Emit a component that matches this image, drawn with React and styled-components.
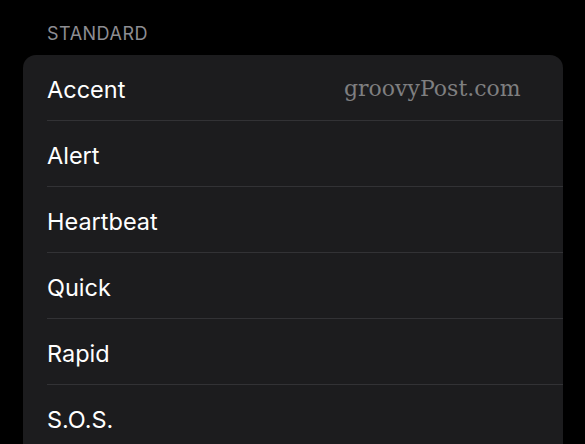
import React from "react";
import styled, { createGlobalStyle } from "styled-components";

const Global = createGlobalStyle`
  html, body { margin: 0; padding: 0; background: #000; }
  body { font-family: Inter, "Noto Sans", sans-serif; overflow: hidden; }
`;

const Page = styled.div`
  width: 585px;
  height: 444px;
  background: #000;
  padding: 23px 22px 0 23px;
  box-sizing: border-box;
  overflow: hidden;
  position: relative;
`;

const SectionHeader = styled.div`
  color: #8d8d92;
  font-size: 18px;
  letter-spacing: 0.5px;
  line-height: 22px;
  padding-left: 24px;
  margin-bottom: 10px;
`;

const Card = styled.div`
  background: #1c1c1e;
  border-radius: 13px 13px 0 0;
  height: 400px;
  padding-left: 24px;
  position: relative;
`;

const Row = styled.div`
  height: 62px;
  padding-top: 3px;
  display: flex;
  align-items: center;
  color: #fff;
  font-size: 23.5px;
  border-top: ${(p) => (p.$first ? "none" : "1px solid #323235")};
`;

const Watermark = styled.div`
  position: absolute;
  top: 21px;
  left: 321px;
  font-family: "DejaVu Serif", "Liberation Serif", serif;
  font-size: 22px;
  color: #7f7f80;
`;

const items = ["Accent", "Alert", "Heartbeat", "Quick", "Rapid", "S.O.S."];

export default function App() {
  return (
    <>
      <Global />
      <Page>
        <SectionHeader>STANDARD</SectionHeader>
        <Card>
          {items.map((t, i) => (
            <Row key={t} $first={i === 0}>
              {t}
            </Row>
          ))}
          <Watermark>groovyPost.com</Watermark>
        </Card>
      </Page>
    </>
  );
}
